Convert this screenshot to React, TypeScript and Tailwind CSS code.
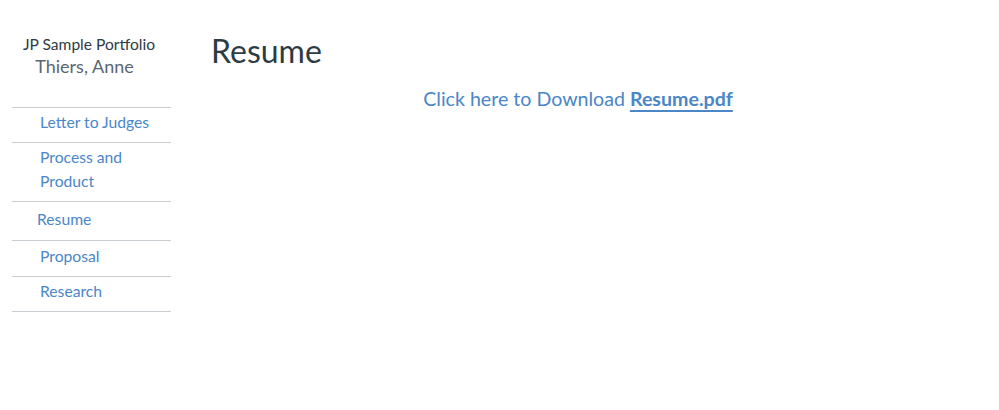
import React from "react";

const links = [
  { label: "Letter to Judges", cls: "pl-7 pt-[2px] pb-[8px]" },
  { label: "Process and Product", cls: "pl-7 pr-6 pt-[2px] pb-[8px]" },
  { label: "Resume", cls: "pl-[25px] pt-[5px] pb-[9px]" },
  { label: "Proposal", cls: "pl-7 pt-[3px] pb-[8px]" },
  { label: "Research", cls: "pl-7 pt-[2px] pb-[8px]" },
];

export default function App() {
  return (
    <div
      className="flex h-[410px] w-[999px] bg-white"
      style={{ fontFamily: "Lato, 'Open Sans', sans-serif" }}
    >
      <aside className="ml-3 w-[159px] shrink-0 pt-[35px]">
        <div className="text-center">
          <p className="text-[15.6px] leading-[18px] text-[#2d3b45] -ml-[5px]">JP Sample Portfolio</p>
          <p className="mt-[1px] text-[18px] leading-[24px] text-[#5b6670] -ml-[14px]">Thiers, Anne</p>
        </div>
        <ul className="mt-[29px] border-t border-[#c7cdd1]">
          {links.map((l) => (
            <li key={l.label} className="border-b border-[#c7cdd1]">
              <a className={`block ${l.cls} text-[15.7px] leading-[24px] text-[#4a86c8]`} href="#">
                {l.label}
              </a>
            </li>
          ))}
        </ul>
      </aside>
      <main className="ml-10 w-[734px] pt-[31px]">
        <h1 className="text-[32px] leading-[40px] text-[#2d3b45]">Resume</h1>
        <p className="mt-[14px] text-center text-[19.6px] leading-[28px] text-[#4a86c8]">
          Click here to Download{" "}
          <a href="#" className="font-bold underline underline-offset-[4px] decoration-[2px]">
            Resume.pdf
          </a>
        </p>
      </main>
    </div>
  );
}
